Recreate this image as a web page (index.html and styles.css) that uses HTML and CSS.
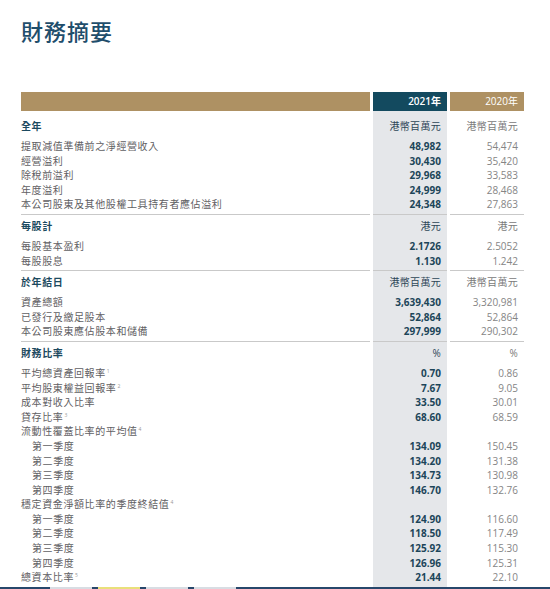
FILE: index.html
```html
<!DOCTYPE html>
<html lang="zh-Hant">
<head>
<meta charset="utf-8">
<title>財務摘要</title>
<link rel="stylesheet" href="styles.css">
</head>
<body>
<div class="page">
  <h1 class="title">財務摘要</h1>
  <div class="table">
    <div class="row years">
      <div class="cell label"></div>
      <div class="cell c21">2021年</div>
      <div class="cell c20">2020年</div>
    </div>

    <div class="section first">
      <div class="row head"><div class="cell label">全年</div><div class="cell c21">港幣百萬元</div><div class="cell c20">港幣百萬元</div></div>
      <div class="row"><div class="cell label">提取減值準備前之淨經營收入</div><div class="cell c21">48,982</div><div class="cell c20">54,474</div></div>
      <div class="row"><div class="cell label">經營溢利</div><div class="cell c21">30,430</div><div class="cell c20">35,420</div></div>
      <div class="row"><div class="cell label">除稅前溢利</div><div class="cell c21">29,968</div><div class="cell c20">33,583</div></div>
      <div class="row"><div class="cell label">年度溢利</div><div class="cell c21">24,999</div><div class="cell c20">28,468</div></div>
      <div class="row"><div class="cell label">本公司股東及其他股權工具持有者應佔溢利</div><div class="cell c21">24,348</div><div class="cell c20">27,863</div></div>
    </div>

    <div class="section">
      <div class="row head"><div class="cell label">每股計</div><div class="cell c21">港元</div><div class="cell c20">港元</div></div>
      <div class="row"><div class="cell label">每股基本盈利</div><div class="cell c21">2.1726</div><div class="cell c20">2.5052</div></div>
      <div class="row"><div class="cell label">每股股息</div><div class="cell c21">1.130</div><div class="cell c20">1.242</div></div>
    </div>

    <div class="section">
      <div class="row head"><div class="cell label">於年結日</div><div class="cell c21">港幣百萬元</div><div class="cell c20">港幣百萬元</div></div>
      <div class="row"><div class="cell label">資產總額</div><div class="cell c21">3,639,430</div><div class="cell c20">3,320,981</div></div>
      <div class="row"><div class="cell label">已發行及繳足股本</div><div class="cell c21">52,864</div><div class="cell c20">52,864</div></div>
      <div class="row"><div class="cell label">本公司股東應佔股本和儲備</div><div class="cell c21">297,999</div><div class="cell c20">290,302</div></div>
    </div>

    <div class="section">
      <div class="row head"><div class="cell label">財務比率</div><div class="cell c21">%</div><div class="cell c20">%</div></div>
      <div class="row"><div class="cell label">平均總資產回報率<sup class="fn">1</sup></div><div class="cell c21">0.70</div><div class="cell c20">0.86</div></div>
      <div class="row"><div class="cell label">平均股東權益回報率<sup class="fn">2</sup></div><div class="cell c21">7.67</div><div class="cell c20">9.05</div></div>
      <div class="row"><div class="cell label">成本對收入比率</div><div class="cell c21">33.50</div><div class="cell c20">30.01</div></div>
      <div class="row"><div class="cell label">貸存比率<sup class="fn">3</sup></div><div class="cell c21">68.60</div><div class="cell c20">68.59</div></div>
      <div class="row"><div class="cell label">流動性覆蓋比率的平均值<sup class="fn">4</sup></div><div class="cell c21"></div><div class="cell c20"></div></div>
      <div class="row"><div class="cell label sub">第一季度</div><div class="cell c21">134.09</div><div class="cell c20">150.45</div></div>
      <div class="row"><div class="cell label sub">第二季度</div><div class="cell c21">134.20</div><div class="cell c20">131.38</div></div>
      <div class="row"><div class="cell label sub">第三季度</div><div class="cell c21">134.73</div><div class="cell c20">130.98</div></div>
      <div class="row"><div class="cell label sub">第四季度</div><div class="cell c21">146.70</div><div class="cell c20">132.76</div></div>
      <div class="row"><div class="cell label">穩定資金淨額比率的季度終結值<sup class="fn">4</sup></div><div class="cell c21"></div><div class="cell c20"></div></div>
      <div class="row"><div class="cell label sub">第一季度</div><div class="cell c21">124.90</div><div class="cell c20">116.60</div></div>
      <div class="row"><div class="cell label sub">第二季度</div><div class="cell c21">118.50</div><div class="cell c20">117.49</div></div>
      <div class="row"><div class="cell label sub">第三季度</div><div class="cell c21">125.92</div><div class="cell c20">115.30</div></div>
      <div class="row"><div class="cell label sub">第四季度</div><div class="cell c21">126.96</div><div class="cell c20">125.31</div></div>
      <div class="row"><div class="cell label">總資本比率<sup class="fn">5</sup></div><div class="cell c21">21.44</div><div class="cell c20">22.10</div></div>
    </div>
  </div>
</div>
<div class="taskbar">
  <span class="tb tb-a"></span><span class="tb tb-b"></span><span class="tb tb-a"></span><span class="tb tb-a"></span>
</div>
</body>
</html>
```

FILE: styles.css
```css
html, body {
  margin: 0;
  padding: 0;
  background: #ffffff;
}

body {
  font-family: "Open Sans", "Noto Sans CJK TC", sans-serif;
  overflow: hidden;
}

.page {
  padding: 17px 0 0 21px;
}

.title {
  margin: 0;
  font-family: "Noto Sans CJK TC", sans-serif;
  font-size: 22px;
  line-height: 26px;
  font-weight: 500;
  letter-spacing: 1px;
  color: #1f4e6c;
}

.table {
  margin-top: 49px;
  width: 503px;
}

.row {
  display: grid;
  grid-template-columns: 349px 74px 74px;
  column-gap: 3px;
}

.cell {
  font-size: 10px;
  line-height: 14.6px;
  white-space: nowrap;
}

.label {
  color: #5f6063;
  letter-spacing: 0.6px;
}

.label.sub {
  padding-left: 11px;
}

.fn {
  font-size: 5px;
  line-height: 0;
  vertical-align: 4px;
  letter-spacing: 0;
  color: #9a9a9a;
  margin-left: 1px;
}

.c21,
.c20 {
  text-align: right;
  padding-right: 6px;
}

.c21 {
  background: #e5e7ea;
  color: #1c4559;
  font-weight: 700;
}

.c20 {
  color: #858585;
}

/* year header bar */
.years .cell {
  height: 19px;
  line-height: 19px;
  color: #ffffff;
  background: #ae9163;
  font-weight: 400;
}

.years .c21 {
  background: #134a5f;
  font-weight: 600;
}

/* section heads */
.head .cell {
  padding-top: 4px;
  padding-bottom: 6px;
  line-height: 14px;
  border-top: 1px solid #c9c9c9;
}

.first .head .cell {
  border-top: 0;
  padding-top: 8px;
}

.head .label {
  font-family: "Noto Sans CJK TC", sans-serif;
  font-weight: 700;
  color: #1c4a60;
}

.head .c21 {
  font-weight: 400;
  color: #2d4657;
  letter-spacing: 0.3px;
}

.head .c20 {
  color: #7a7a7a;
  letter-spacing: 0.3px;
}

.section .row:last-child .cell {
  padding-bottom: 2px;
}

/* bottom strip */
.taskbar {
  position: fixed;
  left: 0;
  right: 0;
  bottom: 0;
  height: 2px;
  background: #27476b;
  display: flex;
  gap: 6px;
  padding-left: 50px;
}

.tb {
  width: 42px;
  height: 2px;
  background: #d8dde3;
}

.tb-b {
  background: #e9e07a;
}
```
